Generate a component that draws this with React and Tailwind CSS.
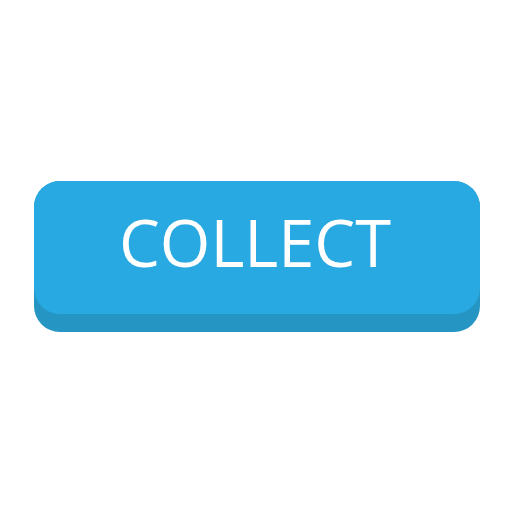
export default function App() {
  return (
    <div className="w-[512px] h-[512px] bg-white pt-[181px] pl-[34px]">
      <div className="w-[446px] h-[151px] rounded-[26px] bg-[#2596c4]">
        <div
          className="h-[133px] rounded-[26px] bg-[#29a9e1] flex items-center justify-center text-white text-[65px] leading-none pb-[10px] pr-[4px]"
          style={{ fontFamily: '"Open Sans", sans-serif' }}
        >
          COLLECT
        </div>
      </div>
    </div>
  );
}
